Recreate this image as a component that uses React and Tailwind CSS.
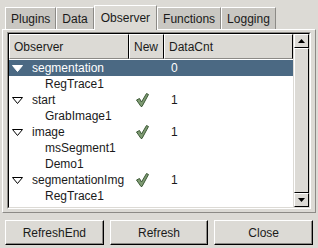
const rows = [
  { name: "segmentation", level: 0, data: "0", selected: true },
  { name: "RegTrace1", level: 1 },
  { name: "start", level: 0, check: true, data: "1" },
  { name: "GrabImage1", level: 1 },
  { name: "image", level: 0, check: true, data: "1" },
  { name: "msSegment1", level: 1 },
  { name: "Demo1", level: 1 },
  { name: "segmentationImg", level: 0, check: true, data: "1" },
  { name: "RegTrace1", level: 1 },
];

const tabs = ["Plugins", "Data", "Observer", "Functions", "Logging"];

const Expander = ({ filled }) => (
  <svg width="11" height="7" viewBox="0 0 11 7" className="shrink-0">
    <path
      d="M0.5 0.5 L10.5 0.5 L5.5 6.5 Z"
      fill={filled ? "#ffffff" : "none"}
      stroke={filled ? "#ffffff" : "#000000"}
      strokeWidth="1"
    />
  </svg>
);

const Check = () => (
  <svg width="13" height="14" viewBox="0 0 13 14">
    <path
      d="M0.5 7 L3.5 5.5 L5.5 9 L10.5 0.5 L12.5 1.5 L6 13.5 L5 13.5 Z"
      fill="#7e9a72"
      stroke="#3d5a37"
      strokeWidth="1"
      strokeLinejoin="round"
    />
  </svg>
);

const Arrow = ({ up }) => (
  <svg width="7" height="4" viewBox="0 0 7 4">
    <path d={up ? "M0 4 L7 4 L3.5 0 Z" : "M0 0 L7 0 L3.5 4 Z"} fill="#000" />
  </svg>
);

const raised =
  "border-t border-l border-t-white border-l-white border-r border-b border-r-[#8c8a86] border-b-[#8c8a86]";

const Button = ({ label }) => (
  <button className="h-[25px] flex-1 border border-b-black border-r-black border-t-white border-l-white bg-[#dcdad5] text-[12px] text-[#1a1a1a] shadow-[inset_-1px_-1px_0_#8c8a86]">
    {label}
  </button>
);

export default function App() {
  return (
    <div
      className="flex h-[248px] w-[318px] flex-col overflow-hidden bg-[#dcdad5] text-[12px] text-[#1a1a1a]"
      style={{ fontFamily: '"Liberation Sans", Arial, sans-serif' }}
    >
      {/* tabs */}
      <div className="flex h-[29px] items-end pl-[5px] pt-[5px]">
        {tabs.map((t) => {
          const active = t === "Observer";
          return (
            <div
              key={t}
              className={`relative flex items-center ${raised} ${
                active
                  ? "z-10 -mb-[1px] h-[25px] border-b-0 bg-[#dcdad5] px-[6px]"
                  : "h-[22px] border-b-0 bg-[#c9c7c2] px-[5px]"
              }`}
            >
              {t}
            </div>
          );
        })}
      </div>

      {/* panel */}
      <div className="mx-[2px] flex h-[184px] flex-col border border-t-white border-l-white border-r-[#8c8a86] border-b-[#8c8a86] px-[4px] pt-[2px]">
        <div className="flex h-[177px] border border-t-[#8c8a86] border-l-[#8c8a86] border-r-white border-b-white">
          <div className="flex flex-1 border border-t-black border-l-black border-r-[#dcdad5] border-b-[#dcdad5]">
            <div className="flex flex-1 flex-col bg-white">
              {/* header */}
              <div className="flex h-[25px] bg-[#dcdad5]">
                <div className={`flex w-[120px] items-center pl-[4px] ${raised} border-r-black`}>
                  Observer
                </div>
                <div className={`flex w-[35px] items-center pl-[4px] ${raised} border-r-black`}>
                  New
                </div>
                <div className={`flex flex-1 items-center pl-[4px] ${raised} border-r-black`}>
                  DataCnt
                </div>
              </div>
              <div className="h-[1px]" />
              {rows.map((r, i) => (
                <div
                  key={i}
                  className={`flex h-[16px] items-center ${
                    r.selected ? "bg-[#4b6983] text-white" : ""
                  }`}
                >
                  <div className="flex w-[120px] items-center">
                    {r.level === 0 ? (
                      <>
                        <span className="ml-[3px] mr-[9px] flex">
                          <Expander filled={r.selected} />
                        </span>
                        <span>{r.name}</span>
                      </>
                    ) : (
                      <span className="pl-[36px]">{r.name}</span>
                    )}
                  </div>
                  <div className="flex w-[35px] items-center pl-[7px]">
                    {r.check && <Check />}
                  </div>
                  <div className="flex-1 pl-[7px]">{r.data}</div>
                </div>
              ))}
            </div>
            {/* scrollbar */}
            <div className="flex w-[16px] flex-col border-l border-[#dcdad5] bg-[#dcdad5]">
              <div className={`flex h-[14px] items-center justify-center ${raised} border-r-black border-b-black`}>
                <Arrow up />
              </div>
              <div className={`flex-1 ${raised} border-r-black border-b-black`} />
              <div className={`flex h-[14px] items-center justify-center ${raised} border-r-black border-b-black`}>
                <Arrow />
              </div>
            </div>
          </div>
        </div>
      </div>

      {/* buttons */}
      <div className="flex gap-[6px] px-[5px] pt-[7px]">
        <Button label="RefreshEnd" />
        <Button label="Refresh" />
        <Button label="Close" />
      </div>
    </div>
  );
}
